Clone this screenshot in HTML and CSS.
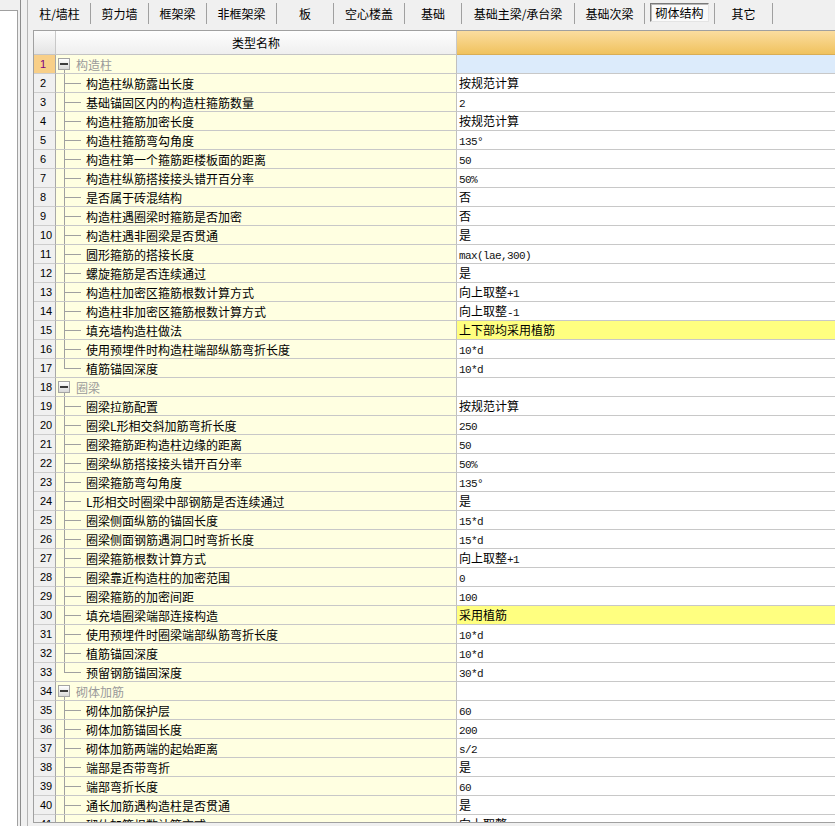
FILE: index.html
```html
<!DOCTYPE html>
<html lang="zh-CN">
<head>
<meta charset="utf-8">
<title>砌体结构</title>
<link rel="stylesheet" href="styles.css">
</head>
<body>
<div class="side"></div>
<div class="split"></div>
<div class="main">
  <div class="tabs">
    <div class="tab w62">柱/墙柱</div>
    <div class="tab w58">剪力墙</div>
    <div class="tab w58">框架梁</div>
    <div class="tab w70">非框架梁</div>
    <div class="tab w57">板</div>
    <div class="tab w71">空心楼盖</div>
    <div class="tab w57">基础</div>
    <div class="tab w113">基础主梁/承台梁</div>
    <div class="tab w70">基础次梁</div>
    <div class="tab w70"><span class="on">砌体结构</span></div>
    <div class="tab w58">其它</div>
  </div>
  <div class="grid">
    <div class="hdr"><div class="c0"></div><div class="c1">类型名称</div><div class="c2"></div></div>

    <div class="row g sel"><div class="c0">1</div><div class="c1"><div class="gb"><div class="sp"></div><div class="box"><span class="mn"></span></div><div class="ln"></div></div><span class="gt">构造柱</span></div><div class="c2"></div></div>
    <div class="row"><div class="c0">2</div><div class="c1"><div class="br"><div class="up"></div><div class="dn"></div></div><span class="t">构造柱纵筋露出长度</span></div><div class="c2">按规范计算</div></div>
    <div class="row"><div class="c0">3</div><div class="c1"><div class="br"><div class="up"></div><div class="dn"></div></div><span class="t">基础锚固区内的构造柱箍筋数量</span></div><div class="c2"><span class="a">2</span></div></div>
    <div class="row"><div class="c0">4</div><div class="c1"><div class="br"><div class="up"></div><div class="dn"></div></div><span class="t">构造柱箍筋加密长度</span></div><div class="c2">按规范计算</div></div>
    <div class="row"><div class="c0">5</div><div class="c1"><div class="br"><div class="up"></div><div class="dn"></div></div><span class="t">构造柱箍筋弯勾角度</span></div><div class="c2"><span class="a">135°</span></div></div>
    <div class="row"><div class="c0">6</div><div class="c1"><div class="br"><div class="up"></div><div class="dn"></div></div><span class="t">构造柱第一个箍筋距楼板面的距离</span></div><div class="c2"><span class="a">50</span></div></div>
    <div class="row"><div class="c0">7</div><div class="c1"><div class="br"><div class="up"></div><div class="dn"></div></div><span class="t">构造柱纵筋搭接接头错开百分率</span></div><div class="c2"><span class="a">50%</span></div></div>
    <div class="row"><div class="c0">8</div><div class="c1"><div class="br"><div class="up"></div><div class="dn"></div></div><span class="t">是否属于砖混结构</span></div><div class="c2">否</div></div>
    <div class="row"><div class="c0">9</div><div class="c1"><div class="br"><div class="up"></div><div class="dn"></div></div><span class="t">构造柱遇圈梁时箍筋是否加密</span></div><div class="c2">否</div></div>
    <div class="row"><div class="c0">10</div><div class="c1"><div class="br"><div class="up"></div><div class="dn"></div></div><span class="t">构造柱遇非圈梁是否贯通</span></div><div class="c2">是</div></div>
    <div class="row"><div class="c0">11</div><div class="c1"><div class="br"><div class="up"></div><div class="dn"></div></div><span class="t">圆形箍筋的搭接长度</span></div><div class="c2"><span class="a">max(lae,300)</span></div></div>
    <div class="row"><div class="c0">12</div><div class="c1"><div class="br"><div class="up"></div><div class="dn"></div></div><span class="t">螺旋箍筋是否连续通过</span></div><div class="c2">是</div></div>
    <div class="row"><div class="c0">13</div><div class="c1"><div class="br"><div class="up"></div><div class="dn"></div></div><span class="t">构造柱加密区箍筋根数计算方式</span></div><div class="c2">向上取整<span class="a">+1</span></div></div>
    <div class="row"><div class="c0">14</div><div class="c1"><div class="br"><div class="up"></div><div class="dn"></div></div><span class="t">构造柱非加密区箍筋根数计算方式</span></div><div class="c2">向上取整<span class="a">-1</span></div></div>
    <div class="row"><div class="c0">15</div><div class="c1"><div class="br"><div class="up"></div><div class="dn"></div></div><span class="t">填充墙构造柱做法</span></div><div class="c2 hl">上下部均采用植筋</div></div>
    <div class="row"><div class="c0">16</div><div class="c1"><div class="br"><div class="up"></div><div class="dn"></div></div><span class="t">使用预埋件时构造柱端部纵筋弯折长度</span></div><div class="c2"><span class="a">10*d</span></div></div>
    <div class="row"><div class="c0">17</div><div class="c1"><div class="br last"><div class="up"></div><div class="dn"></div></div><span class="t">植筋锚固深度</span></div><div class="c2"><span class="a">10*d</span></div></div>

    <div class="row g"><div class="c0">18</div><div class="c1"><div class="gb"><div class="sp"></div><div class="box"><span class="mn"></span></div><div class="ln"></div></div><span class="gt">圈梁</span></div><div class="c2"></div></div>
    <div class="row"><div class="c0">19</div><div class="c1"><div class="br"><div class="up"></div><div class="dn"></div></div><span class="t">圈梁拉筋配置</span></div><div class="c2">按规范计算</div></div>
    <div class="row"><div class="c0">20</div><div class="c1"><div class="br"><div class="up"></div><div class="dn"></div></div><span class="t">圈梁L形相交斜加筋弯折长度</span></div><div class="c2"><span class="a">250</span></div></div>
    <div class="row"><div class="c0">21</div><div class="c1"><div class="br"><div class="up"></div><div class="dn"></div></div><span class="t">圈梁箍筋距构造柱边缘的距离</span></div><div class="c2"><span class="a">50</span></div></div>
    <div class="row"><div class="c0">22</div><div class="c1"><div class="br"><div class="up"></div><div class="dn"></div></div><span class="t">圈梁纵筋搭接接头错开百分率</span></div><div class="c2"><span class="a">50%</span></div></div>
    <div class="row"><div class="c0">23</div><div class="c1"><div class="br"><div class="up"></div><div class="dn"></div></div><span class="t">圈梁箍筋弯勾角度</span></div><div class="c2"><span class="a">135°</span></div></div>
    <div class="row"><div class="c0">24</div><div class="c1"><div class="br"><div class="up"></div><div class="dn"></div></div><span class="t">L形相交时圈梁中部钢筋是否连续通过</span></div><div class="c2">是</div></div>
    <div class="row"><div class="c0">25</div><div class="c1"><div class="br"><div class="up"></div><div class="dn"></div></div><span class="t">圈梁侧面纵筋的锚固长度</span></div><div class="c2"><span class="a">15*d</span></div></div>
    <div class="row"><div class="c0">26</div><div class="c1"><div class="br"><div class="up"></div><div class="dn"></div></div><span class="t">圈梁侧面钢筋遇洞口时弯折长度</span></div><div class="c2"><span class="a">15*d</span></div></div>
    <div class="row"><div class="c0">27</div><div class="c1"><div class="br"><div class="up"></div><div class="dn"></div></div><span class="t">圈梁箍筋根数计算方式</span></div><div class="c2">向上取整<span class="a">+1</span></div></div>
    <div class="row"><div class="c0">28</div><div class="c1"><div class="br"><div class="up"></div><div class="dn"></div></div><span class="t">圈梁靠近构造柱的加密范围</span></div><div class="c2"><span class="a">0</span></div></div>
    <div class="row"><div class="c0">29</div><div class="c1"><div class="br"><div class="up"></div><div class="dn"></div></div><span class="t">圈梁箍筋的加密间距</span></div><div class="c2"><span class="a">100</span></div></div>
    <div class="row"><div class="c0">30</div><div class="c1"><div class="br"><div class="up"></div><div class="dn"></div></div><span class="t">填充墙圈梁端部连接构造</span></div><div class="c2 hl">采用植筋</div></div>
    <div class="row"><div class="c0">31</div><div class="c1"><div class="br"><div class="up"></div><div class="dn"></div></div><span class="t">使用预埋件时圈梁端部纵筋弯折长度</span></div><div class="c2"><span class="a">10*d</span></div></div>
    <div class="row"><div class="c0">32</div><div class="c1"><div class="br"><div class="up"></div><div class="dn"></div></div><span class="t">植筋锚固深度</span></div><div class="c2"><span class="a">10*d</span></div></div>
    <div class="row"><div class="c0">33</div><div class="c1"><div class="br last"><div class="up"></div><div class="dn"></div></div><span class="t">预留钢筋锚固深度</span></div><div class="c2"><span class="a">30*d</span></div></div>

    <div class="row g"><div class="c0">34</div><div class="c1"><div class="gb"><div class="sp"></div><div class="box"><span class="mn"></span></div><div class="ln"></div></div><span class="gt">砌体加筋</span></div><div class="c2"></div></div>
    <div class="row"><div class="c0">35</div><div class="c1"><div class="br"><div class="up"></div><div class="dn"></div></div><span class="t">砌体加筋保护层</span></div><div class="c2"><span class="a">60</span></div></div>
    <div class="row"><div class="c0">36</div><div class="c1"><div class="br"><div class="up"></div><div class="dn"></div></div><span class="t">砌体加筋锚固长度</span></div><div class="c2"><span class="a">200</span></div></div>
    <div class="row"><div class="c0">37</div><div class="c1"><div class="br"><div class="up"></div><div class="dn"></div></div><span class="t">砌体加筋两端的起始距离</span></div><div class="c2"><span class="a">s/2</span></div></div>
    <div class="row"><div class="c0">38</div><div class="c1"><div class="br"><div class="up"></div><div class="dn"></div></div><span class="t">端部是否带弯折</span></div><div class="c2">是</div></div>
    <div class="row"><div class="c0">39</div><div class="c1"><div class="br"><div class="up"></div><div class="dn"></div></div><span class="t">端部弯折长度</span></div><div class="c2"><span class="a">60</span></div></div>
    <div class="row"><div class="c0">40</div><div class="c1"><div class="br"><div class="up"></div><div class="dn"></div></div><span class="t">通长加筋遇构造柱是否贯通</span></div><div class="c2">是</div></div>
    <div class="row"><div class="c0">41</div><div class="c1"><div class="br"><div class="up"></div><div class="dn"></div></div><span class="t">砌体加筋根数计算方式</span></div><div class="c2">向上取整<span class="a">+1</span></div></div>
  </div>
</div>
</body>
</html>
```
FILE: styles.css
```css
* { box-sizing: border-box; }

body {
  margin: 0;
  width: 835px;
  height: 826px;
  overflow: hidden;
  background: #f0f0f0;
  display: flex;
  font-family: "Noto Sans CJK SC", "Liberation Sans", sans-serif;
  font-size: 12px;
  color: #000;
}

.side {
  flex: none;
  width: 18px;
  height: 816px;
  margin-top: 10px;
  background: #fff;
  border-top: 1px solid #a0a0a0;
  border-right: 1px solid #a0a0a0;
}

.split {
  flex: none;
  width: 1px;
  margin-left: 2px;
  background: #8c8c8c;
}

.main {
  flex: none;
  width: 808px;
  margin-left: 6px;
  border-left: 1px solid #b4b4b4;
  overflow: hidden;
}

.tabs {
  display: flex;
  height: 27px;
  padding-left: 1px;
}

.tab {
  flex: none;
  height: 21px;
  margin-top: 3px;
  border-right: 1px solid #a0a0a0;
  display: flex;
  align-items: center;
  justify-content: center;
  line-height: 1;
  white-space: nowrap;
}

.w57 { width: 57px; }
.w58 { width: 58px; }
.w62 { width: 62px; }
.w70 { width: 70px; }
.w71 { width: 71px; }
.w113 { width: 113px; }

.tab .on {
  align-self: flex-start;
  width: 59px;
  height: 19px;
  border: 1px solid;
  border-color: #7a7a7a #e4e4e4 #e4e4e4 #7a7a7a;
  box-shadow: inset 1px 1px 0 #b8b8b8;
  background: #fafafa;
  display: flex;
  align-items: center;
  justify-content: center;
}

.grid {
  margin-left: 5px;
  margin-top: 3px;
  width: 900px;
  height: 793px;
  border: 1px solid #a0a0a0;
  border-right: none;
  overflow: hidden;
  background: #fff;
}

.hdr { display: flex; height: 24px; }
.row { display: flex; height: 19px; }

.c0 { flex: none; width: 22px; }
.c1 { flex: none; width: 401px; }
.c2 { flex: 1; }

.hdr .c0 {
  background: linear-gradient(#fbfbfb, #e4e4e4);
  border-right: 1px solid #c8c8c8;
  border-bottom: 1px solid #c4c4c4;
}
.hdr .c1 {
  background: linear-gradient(#fefefe, #efefef);
  border-right: 1px solid #c8c8c8;
  border-bottom: 1px solid #c4c4c4;
  display: flex;
  align-items: center;
  justify-content: center;
}
.hdr .c2 {
  background: linear-gradient(#fbdd9f, #f0c25e);
  border-bottom: 1px solid #d9ad55;
}

.row .c0 {
  background: #f0f0f0;
  border-right: 1px solid #a8a8a8;
  border-bottom: 1px solid #cdcdcd;
  font-family: "Liberation Sans", sans-serif;
  font-size: 11px;
  padding-left: 6px;
  display: flex;
  align-items: center;
}
.row .c1 {
  background: #ffffe1;
  border-right: 1px solid #c0c0c0;
  border-bottom: 1px solid #c8c8c8;
  display: flex;
  padding-left: 2px;
  white-space: nowrap;
}
.row .c2 {
  background: #fff;
  border-bottom: 1px solid #c8c8c8;
  padding-left: 2px;
  line-height: 18px;
  white-space: nowrap;
}
.row .c2.hl { background: #ffff80; }

.sel .c0 { background: #f8cf88; color: #800080; }
.sel .c2 { background: #dcebfb; }

.t { align-self: center; margin-left: 5px; }
.gt { align-self: center; margin-left: 6px; color: #9a9a9a; }

.a {
  font-family: "Liberation Mono", monospace;
  font-size: 11px;
  letter-spacing: -0.6px;
  color: #111;
}

.br {
  flex: none;
  width: 23px;
  display: flex;
  flex-direction: column;
}
.br .up {
  height: 10px;
  width: 17px;
  margin-left: 6px;
  border-left: 1px solid #a0a0a0;
  border-bottom: 1px solid #a0a0a0;
}
.br .dn {
  flex: 1;
  width: 1px;
  margin-left: 6px;
  border-left: 1px solid #a0a0a0;
}
.br.last .dn { border-left: none; }

.gb {
  flex: none;
  width: 12px;
  display: flex;
  flex-direction: column;
}
.gb .sp { height: 3px; }
.gb .box {
  width: 12px;
  height: 12px;
  border: 1px solid #a4a4a4;
  background: linear-gradient(#ffffff, #d8d8d8);
  display: flex;
  align-items: center;
  justify-content: center;
}
.gb .mn {
  width: 8px;
  height: 2px;
  background: #3c3c3c;
}
.gb .ln {
  flex: 1;
  width: 1px;
  margin-left: 6px;
  border-left: 1px solid #a0a0a0;
}
```
